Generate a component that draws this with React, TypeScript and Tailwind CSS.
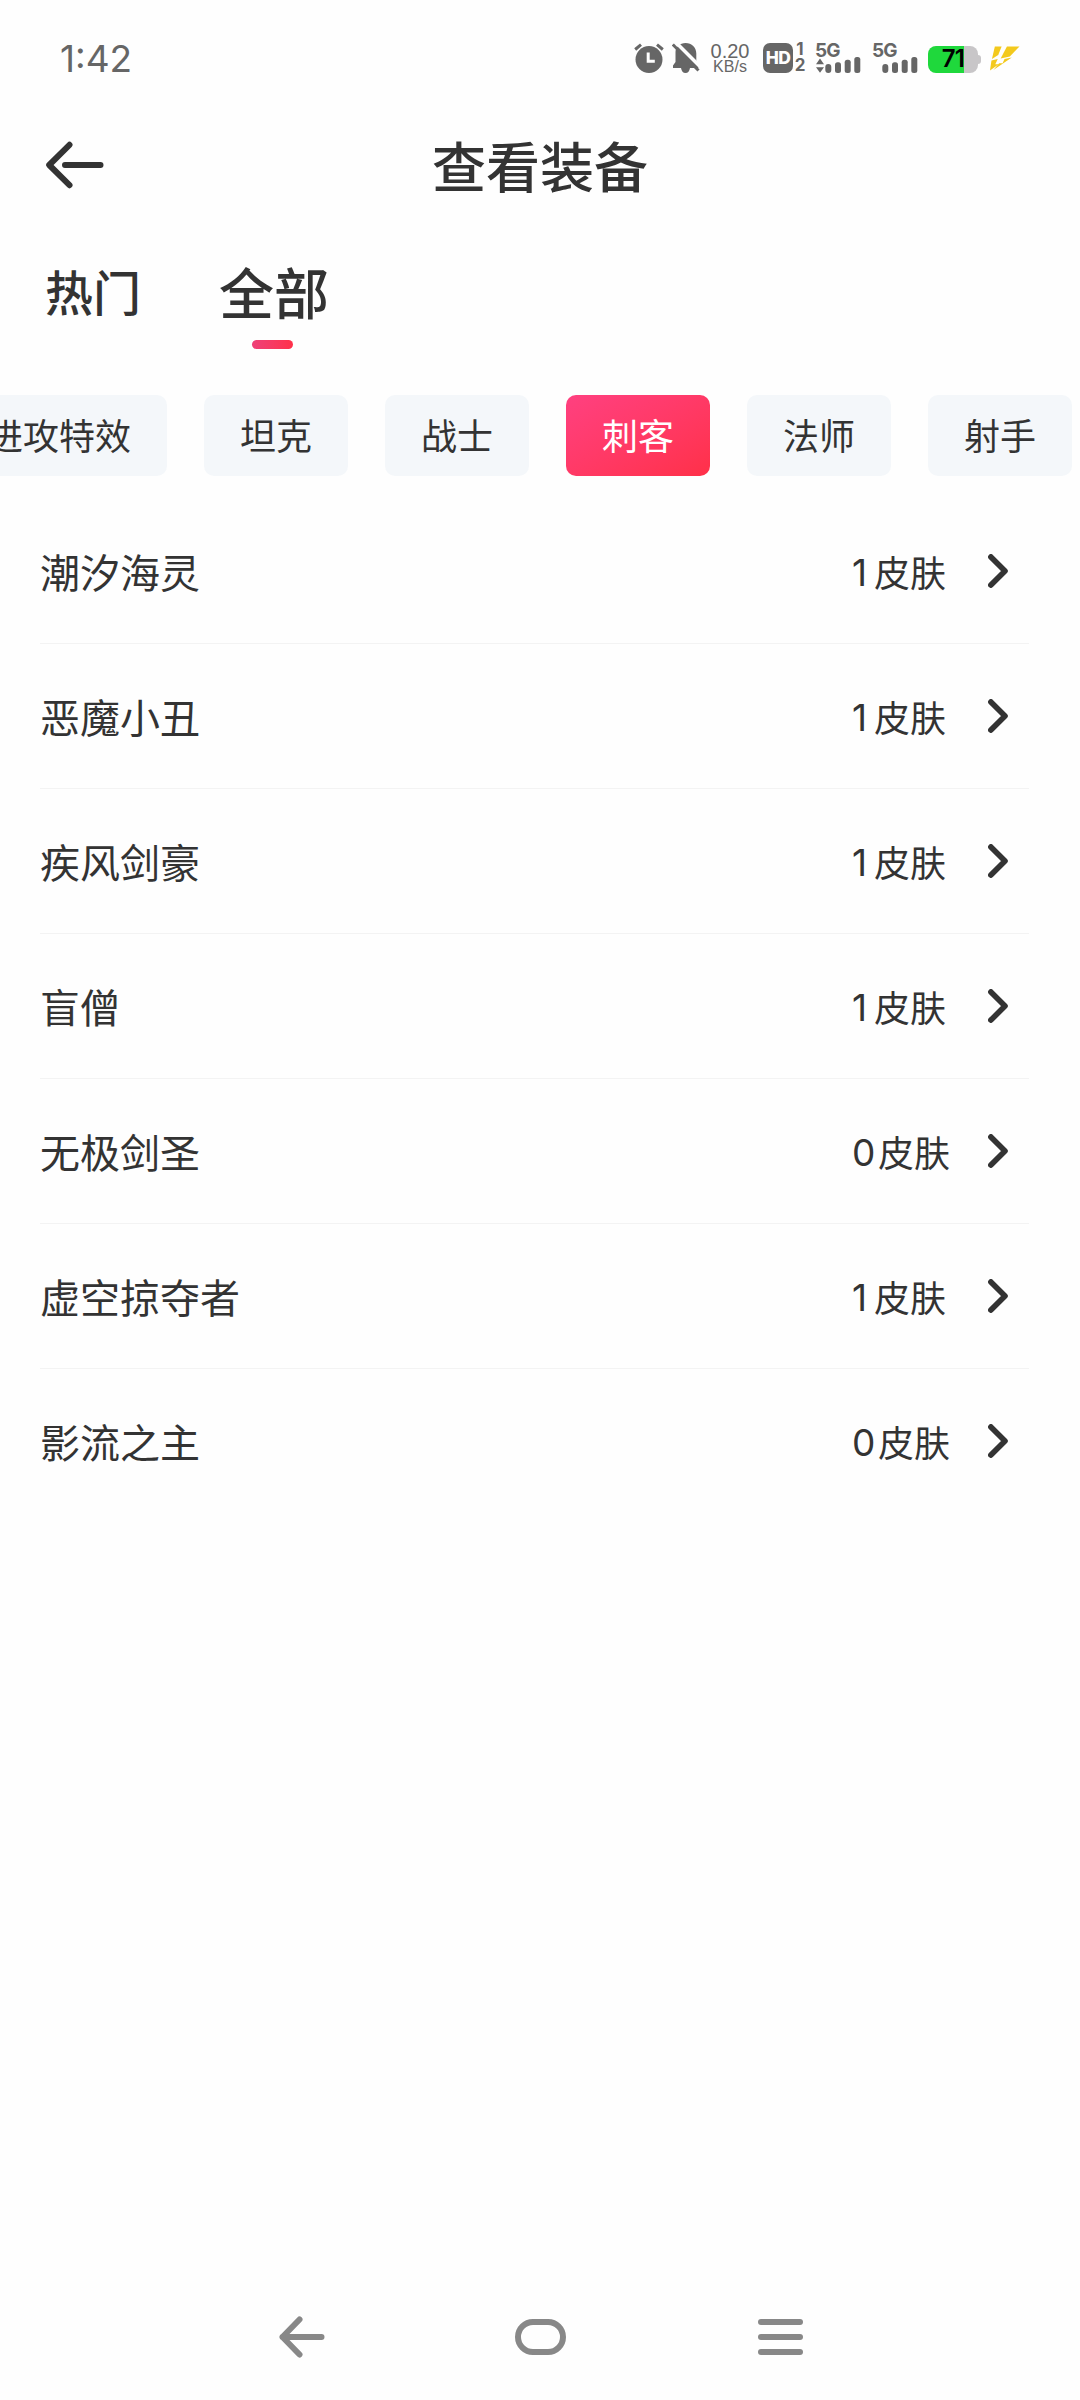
import React from "react";

const categories = ["进攻特效", "坦克", "战士", "刺客", "法师", "射手"];

const items = [
  { name: "潮汐海灵", count: 1 },
  { name: "恶魔小丑", count: 1 },
  { name: "疾风剑豪", count: 1 },
  { name: "盲僧", count: 1 },
  { name: "无极剑圣", count: 0 },
  { name: "虚空掠夺者", count: 1 },
  { name: "影流之主", count: 0 },
];

function AlarmIcon() {
  return (
    <svg className="h-[30px] w-[30px]" viewBox="0 0 30 30" fill="none">
      <circle cx="15" cy="16.5" r="13.5" fill="#666" />
      <path d="M1.2 6.5 7 1.6M28.8 6.5 23 1.6" stroke="#666" strokeWidth="3" />
      <path d="M14.2 9.5v8.7h6.6" stroke="#fefefe" strokeWidth="3" />
    </svg>
  );
}

function BellOffIcon() {
  return (
    <svg className="h-[30px] w-[28px]" viewBox="0 0 28 30" fill="none">
      <path
        d="M13.500 0c6.300 0 10.800 4.500 10.800 10.500v8.500l2.200 3.500v2.500H18c-.5 3-2 5-4.500 5s-4-2-4.500-5H1v-2.500l2.500-3.500V9C3.500 4 8 0 13.500 0Z"
        fill="#666"
      />
      <path d="M3 -1.500 30 25.500" stroke="#fefefe" strokeWidth="3.500" />
      <path d="M.8 1.500 26.500 27.500" stroke="#666" strokeWidth="3" />
    </svg>
  );
}

function Signal({ arrows }: { arrows?: boolean }) {
  return (
    <div className="relative h-[30px] w-[45px]">
      <span className="absolute -left-px -top-[1px] font-[Inter] text-[19px] font-bold leading-[18px] tracking-[-0.8px]">
        5G
      </span>
      <svg className="absolute inset-0 h-[30px] w-[45px]" viewBox="0 0 45 30" fill="#666">
        {arrows && <path d="M0 21.300 4 15.500l4 5.800ZM0 24.200h8L4 29.800Z" />}
        <rect x="9.300" y="21" width="6" height="9" rx="3" />
        <rect x="19" y="19.300" width="6" height="10.700" rx="2.500" />
        <rect x="28.700" y="16.700" width="6" height="13.300" rx="2.500" />
        <rect x="38.300" y="14" width="6" height="16" rx="2.500" />
      </svg>
    </div>
  );
}

function StatusBar() {
  return (
    <div className="flex h-[116px] items-center pl-[60px] pr-[60px] font-[Inter] text-[#666]">
      <span className="text-[37px] leading-none">1:42</span>
      <div className="ml-auto flex h-[30px] items-center">
        <AlarmIcon />
        <div className="ml-[8px]">
          <BellOffIcon />
        </div>
        <div className="ml-[8px] flex w-[44px] flex-col items-center">
          <span className="font-['Liberation_Sans'] text-[20px] leading-[16px]">0.20</span>
          <span className="font-['Liberation_Sans'] text-[16px] leading-[15px]">KB/s</span>
        </div>
        <div className="ml-[11px] flex h-[30px] w-[30px] items-center justify-center rounded-[7px] bg-[#666] text-[17.500px] font-extrabold leading-none tracking-[-0.5px] text-[#fefefe]">
          HD
        </div>
        <div className="ml-[2px] flex w-[10px] flex-col items-center text-[17px] font-bold">
          <span className="leading-[14px]">1</span>
          <span className="leading-[18px]">2</span>
        </div>
        <div className="ml-[11px]">
          <Signal arrows />
        </div>
        <div className="ml-[12px]">
          <Signal />
        </div>
        <div className="ml-[10px] mt-[2px] flex items-center">
          <div className="flex h-[27px] w-[50px] items-center justify-center rounded-[8px] bg-[linear-gradient(90deg,#1fd83c_72%,#c8c6c8_72%)] text-[24px] font-semibold leading-none tracking-[-0.8px] text-black">
            71
          </div>
          <div className="h-[9px] w-[3px] rounded-r bg-[#c8c6c8]" />
        </div>
        <svg className="ml-[9px] h-[25px] w-[30px]" viewBox="0 0 31 25" fill="#f3c91d">
          <path d="M5 0H12L8.500 9 2 13Z" />
          <path d="M17.500 0H30.500L20.500 10.500 11 12.500Z" />
          <path d="M22.500 11.500 3.500 24.500 9.500 17.500 13 17.500 15 13Z" />
          <path d="M1.500 14.500 8 13 5.500 18.500H9L0 25Z" />
        </svg>
      </div>
    </div>
  );
}

function Chevron() {
  return (
    <svg className="h-[34px] w-[20px]" viewBox="0 0 20 34" fill="none" stroke="#333" strokeWidth="5.600" strokeLinecap="round" strokeLinejoin="round">
      <path d="M2.900 2.900 17 17 2.900 31.100" />
    </svg>
  );
}

export default function App() {
  return (
    <div className="flex h-[2400px] w-[1080px] flex-col overflow-hidden bg-[#fefefe] font-['Noto_Sans_CJK_SC',sans-serif] text-[#333]">
      <StatusBar />

      <header className="grid h-[104px] grid-cols-[1fr_auto_1fr] items-center pl-[45px] pr-[45px]">
        <svg className="-mt-[6px] h-[48px] w-[60px]" viewBox="0 0 60 48" fill="none" stroke="#333" strokeWidth="6" strokeLinecap="round" strokeLinejoin="round">
          <path d="M24.500 3.800 4.200 24 24.500 44.200M20 24h35.500" />
        </svg>
        <h1 className="-mt-[6px] text-[54px] font-medium leading-none">查看装备</h1>
      </header>

      <nav className="flex h-[175px] pl-[45px] font-medium">
        <span className="mt-[46px] text-[48px] leading-none">热门</span>
        <div className="ml-[78px] mt-[43px] flex flex-col items-center">
          <span className="text-[55px] leading-none">全部</span>
          <div className="mr-[4px] mt-[22px] h-[9px] w-[41px] rounded-full bg-gradient-to-r from-[#ee4078] to-[#ff3049]" />
        </div>
      </nav>

      <div className="flex h-[81px] w-[1080px] justify-start gap-[37px] overflow-hidden">
        {categories.map((c, i) => (
          <div
            key={c}
            className={
              "flex h-[81px] shrink-0 items-center justify-center rounded-[10px] px-[36px] pb-[3px] text-[36px] leading-none " +
              (i === 0 ? "-ml-[49px] " : "") +
              (c === "刺客"
                ? "bg-gradient-to-br from-[#ff4080] to-[#ff3048] text-white"
                : "bg-[#f4f7fa]")
            }
          >
            {c}
          </div>
        ))}
      </div>

      <ul className="ml-[40px] mr-[51px] mt-[23px] flex flex-col">
        {items.map((item, i) => (
          <li
            key={item.name}
            className={
              "flex h-[145px] items-center border-b pr-[21px] " +
              (i < items.length - 1 ? "border-[#f3f3f3]" : "border-transparent")
            }
          >
            <span className="-mt-[1px] text-[40px] leading-none">{item.name}</span>
            <div className="ml-auto flex w-[156px] items-center">
              <span className="flex items-center text-[36px] leading-none">
                <span
                  className={
                    "mt-[3px] font-[Inter] text-[37px] " +
                    (item.count === 0 ? "w-[26px]" : "w-[22px]")
                  }
                >
                  {item.count}
                </span>
                <span className="-mt-[1px]">皮肤</span>
              </span>
              <span className="ml-auto">
                <Chevron />
              </span>
            </div>
          </li>
        ))}
      </ul>

      <footer className="mt-auto flex h-[126px] items-center pl-[279px]">
        <svg className="h-[42px] w-[46px]" viewBox="0 0 46 42" fill="none" stroke="#888" strokeWidth="6" strokeLinecap="round" strokeLinejoin="round">
          <path d="M20.500 3.500 3.500 21l17 17.500M3.500 21H42.500" />
        </svg>
        <div className="ml-[190px] h-[36px] w-[51px] rounded-[18px] border-[6px] border-[#888]" />
        <div className="ml-[192px] flex w-[45px] flex-col gap-[9px]">
          <div className="h-[6px] rounded-full bg-[#888]" />
          <div className="h-[6px] rounded-full bg-[#888]" />
          <div className="h-[6px] rounded-full bg-[#888]" />
        </div>
      </footer>
    </div>
  );
}
